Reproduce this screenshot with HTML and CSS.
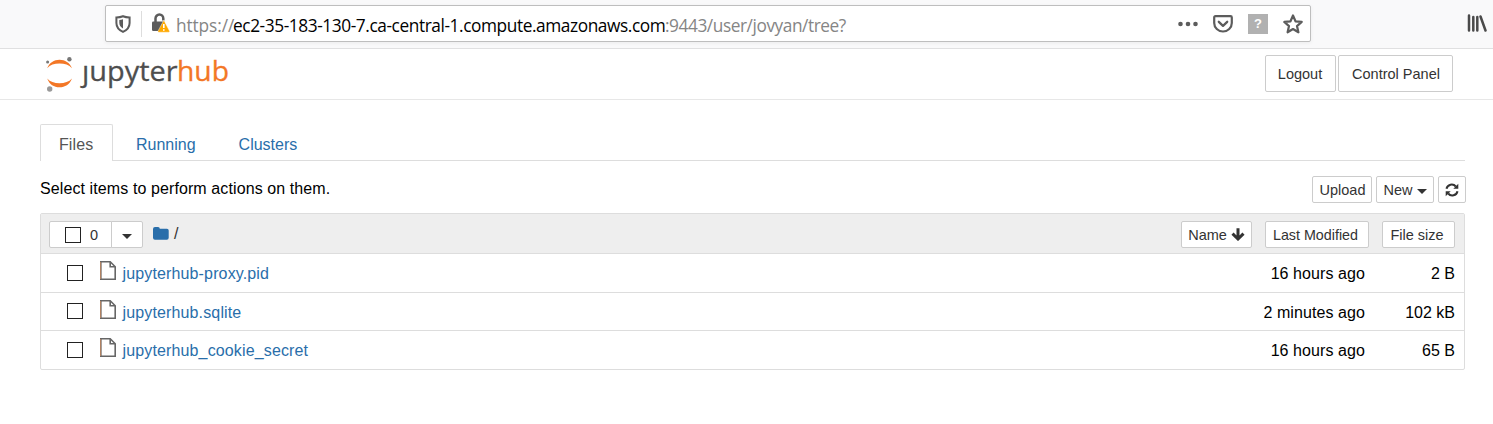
FILE: index.html
```html
<!DOCTYPE html>
<html lang="en">
<head>
<meta charset="utf-8">
<title>Home</title>
<link rel="stylesheet" href="styles.css">
</head>
<body>
<div class="toolbar">
  <div class="urlbar">
    <svg class="shield" width="16" height="18" viewBox="0 0 16 18"><path d="M8 1.200c2.200.9 4.300 1.200 6.600 1.300V8c0 4-2.400 7-6.600 8.900C3.800 15 1.400 12 1.400 8V2.500C3.700 2.400 5.800 2.100 8 1.200z" fill="none" stroke="#5c5c5c" stroke-width="2"/><path d="M8 4.200v9.400c-2.500-1.500-3.700-3.300-3.700-5.800V5C5.600 4.900 6.800 4.700 8 4.200z" fill="#5c5c5c"/></svg>
    <span class="divider"></span>
    <svg class="lock" width="19" height="20" viewBox="0 0 19 20"><path d="M4.500 10V5.500a3.900 3.900 0 0 1 7.800 0v2" fill="none" stroke="#5c5c5c" stroke-width="2.500"/><rect x="1" y="8.500" width="13" height="9.500" rx="1.300" fill="#5c5c5c"/><path d="M12.800 7.300 18.500 18a.8.8 0 0 1-.7 1.200H7.700A.8.800 0 0 1 7 18z" fill="#ffa900" stroke="#fff" stroke-width=".4"/><path d="M12.800 11v4M12.800 16.200v1.500" stroke="#fff" stroke-width="1.600"/></svg>
    <div class="url"><span class="scheme">https://</span><span class="host">ec2-35-183-130-7.ca-central-1.compute.amazonaws.com</span><span class="path">:9443/user/jovyan/tree?</span></div>
    <div class="actions">
      <svg width="20" height="6" viewBox="0 0 20 6"><g fill="#5c5c5c"><circle cx="2.500" cy="3" r="2.300"/><circle cx="10" cy="3" r="2.300"/><circle cx="17.500" cy="3" r="2.300"/></g></svg>
      <svg width="20" height="18" viewBox="0 0 20 18"><path d="M2.500 1.200h15q1.300 0 1.300 1.300v5.500a8.800 8.500 0 0 1-17.600 0V2.500q0-1.300 1.300-1.300z" fill="none" stroke="#5c5c5c" stroke-width="2.200"/><path d="m5.800 6.800 4.200 4 4.200-4" fill="none" stroke="#5c5c5c" stroke-width="2.300" stroke-linecap="round" stroke-linejoin="round"/></svg>
      <span class="unknown">?</span>
      <svg class="star" width="20" height="20" viewBox="0 0 20 20"><path d="m10 1.500 2.500 5.800 6.200.6-4.700 4.200 1.400 6.200-5.400-3.300-5.400 3.300L6 12.100 1.300 7.900l6.200-.6z" fill="none" stroke="#5c5c5c" stroke-width="2.200" stroke-linejoin="round"/></svg>
    </div>
  </div>
  <svg class="library" width="20" height="18" viewBox="0 0 20 18"><path d="M2 1.500v15M6.300 3v13.500M10.300 3v13.500M13.500 2.500l5 14" fill="none" stroke="#4a4a4a" stroke-width="2.500" stroke-linecap="round"/></svg>
</div>
<header class="header">
  <svg class="logo" width="186" height="50" viewBox="0 0 186 50">
    <path d="M2.200 19.300C4.500 13.500 9 10.700 14.500 10.700s10.200 2.800 12.500 8.600c-3-3.300-7.300-4.700-12.500-4.700s-9.400 1.400-12.300 4.700z" fill="#f37726"/>
    <path d="M2.200 29.500C4.500 35.500 9 38.300 14.500 38.300S24.700 35.500 27 29.500c-3 3.300-7.300 4.700-12.500 4.700s-9.400-1.400-12.300-4.700z" fill="#f37726"/>
    <circle cx="24.400" cy="10.300" r="2.200" fill="#777"/><circle cx="2.600" cy="13" r="1.500" fill="#777"/><circle cx="4.700" cy="40" r="2.700" fill="#999"/>
    <text class="logo-text" x="37" y="32" textLength="95.500" lengthAdjust="spacingAndGlyphs" fill="#4e4e4e">ȷupyter</text>
    <text class="logo-text hub" x="132" y="32" textLength="52" lengthAdjust="spacingAndGlyphs" fill="#f37726">hub</text>
  </svg>
  <div class="session"><button class="btn large logout">Logout</button><button class="btn large control">Control Panel</button></div>
</header>
<main class="content">
  <nav class="tabs"><a class="tab active">Files</a><a class="tab">Running</a><a class="tab clusters">Clusters</a></nav>
  <div class="tools">
    <span class="hint">Select items to perform actions on them.</span>
    <div class="tool-buttons">
      <button class="btn upload">Upload</button>
      <button class="btn new">New<i class="caret"></i></button>
      <button class="btn refresh"><svg width="14" height="14" viewBox="0 0 14 14"><path d="M1.500 5.800A5.300 5.300 0 0 1 10.800 3.500M12.500 8.200A5.300 5.300 0 0 1 3.200 10.500" fill="none" stroke="#333" stroke-width="2"/><path d="M13.300.8v5h-5zM.700 13.200v-5h5z" fill="#333"/></svg></button>
    </div>
  </div>
  <section class="list">
    <div class="list-head">
      <div class="select"><button class="btn count"><i class="box"></i>0</button><button class="btn drop"><i class="caret"></i></button></div>
      <svg class="folder" width="16" height="13" viewBox="0 0 16 13"><path d="M0 2Q0 0 2 0h3q1.800 0 1.800 1.800H14q1.700 0 1.700 1.800v7.200q0 1.900-1.900 1.900H2q-2 0-2-1.900z" fill="#296eaa"/></svg>
      <span class="slash">/</span>
      <div class="sorts">
        <button class="btn name">Name<svg width="14" height="13" viewBox="0 0 14 13"><path d="M7 .3v10M1.500 5.700 7 11 12.500 5.700" fill="none" stroke="#333" stroke-width="3"/></svg></button>
        <button class="btn modified">Last Modified</button>
        <button class="btn size">File size</button>
      </div>
    </div>
    <div class="row first"><i class="box"></i><svg class="file" width="16" height="19" viewBox="0 0 16 19"><path d="M.8.8h9.400l5 5v12.400H.8zM10.200.8v5h5" fill="none" stroke="#666" stroke-width="1.600"/><path d="M.6 1v17" stroke="#b98562"/></svg><a class="file-name">jupyterhub-proxy.pid</a><span class="time">16 hours ago</span><span class="bytes">2 B</span></div>
    <div class="row"><i class="box up"></i><svg class="file" width="16" height="19" viewBox="0 0 16 19"><path d="M.8.8h9.400l5 5v12.400H.8zM10.200.8v5h5" fill="none" stroke="#666" stroke-width="1.600"/><path d="M.6 1v17" stroke="#b98562"/></svg><a class="file-name">jupyterhub.sqlite</a><span class="time">2 minutes ago</span><span class="bytes">102 kB</span></div>
    <div class="row last"><i class="box"></i><svg class="file" width="16" height="19" viewBox="0 0 16 19"><path d="M.8.8h9.400l5 5v12.400H.8zM10.200.8v5h5" fill="none" stroke="#666" stroke-width="1.600"/><path d="M.6 1v17" stroke="#b98562"/></svg><a class="file-name">jupyterhub_cookie_secret</a><span class="time">16 hours ago</span><span class="bytes">65 B</span></div>
  </section>
</main>
</body>
</html>
```
FILE: styles.css
```css
* { box-sizing: border-box; }
body { margin: 0; height: 424px; overflow: hidden; background: #fff; color: #000; font: 16px/20px "Liberation Sans", Arial, sans-serif; }
svg { display: block; flex: none; }
.toolbar { height: 49px; padding: 5px 6px 0 105px; display: flex; background: #f9f9fa; border-bottom: 1px solid #e0e0e1; }
.urlbar { width: 1206px; height: 37px; display: flex; align-items: center; padding: 0 7px 0 9px; background: #fff; border: 1px solid #bebebe; border-radius: 2px; box-shadow: 0 1px 4px rgba(0,0,0,.06); }
.divider { width: 1px; height: 26px; background: #ddd; margin-left: 10px; }
.lock { margin: 0 0 1px 9px; }
.url { margin: 4px 0 0 6px; display: flex; white-space: nowrap; font: 17.300px/24px "Open Sans", sans-serif; color: #858585; }
.scheme { width: 57px; letter-spacing: -.1px; }
.host { width: 432px; color: #000; letter-spacing: -.42px; }
.path { letter-spacing: -.44px; }
.actions { margin-left: auto; display: flex; align-items: center; gap: 15px; }
.unknown { width: 20px; height: 20px; background: #b1b1b1; color: #fff; text-align: center; font: bold 13px/20px "Liberation Sans", sans-serif; }
.library { margin: 9px 0 0 auto; }
.header { height: 51px; padding: 0 40px 0 45px; display: flex; justify-content: space-between; border-bottom: 1px solid #e7e7e7; }
.logo { overflow: visible; }
.logo-text { font: 28px "Open Sans", sans-serif; stroke: #4e4e4e; stroke-width: .3px; }
.hub { stroke: #f37726; }
.session { display: flex; gap: 2px; padding-top: 6px; }
.btn { margin: 0; padding: 0; height: 27px; display: flex; align-items: center; justify-content: center; background: #fff; border: 1px solid #ccc; border-radius: 2px; color: #333; font: 14.500px/20px "Liberation Sans", Arial, sans-serif; white-space: nowrap; }
.large { height: 37px; }
.logout { width: 71px; padding-right: 1px; }
.control { width: 115px; padding-left: 1px; }
.content { padding: 24px 28px 0 40px; }
.tabs { display: flex; gap: 1px; height: 37px; border-bottom: 1px solid #ddd; }
.tab { height: 37px; padding: 10px 20px 0 21px; border: 1px solid transparent; border-bottom: 0; color: #296eaa; }
.clusters { padding-left: 20px; }
.active { width: 73px; padding-left: 18px; color: #555; background: #fff; border-color: #ddd; border-radius: 2px 2px 0 0; letter-spacing: .1px; }
.tools { height: 52px; display: flex; justify-content: space-between; padding: 15px 0 0; margin-right: -1px; }
.hint { padding-top: 3px; letter-spacing: .1px; }
.tool-buttons { display: flex; gap: 4px; }
.upload { width: 60px; padding-left: 1px; }
.new { width: 58px; }
.refresh { width: 28px; }
.caret { border: 5px solid transparent; border-top-color: #333; border-bottom: 0; margin: 3px 0 0 4px; }
.list { border: 1px solid #ddd; border-radius: 2px; }
.list-head { height: 40px; padding: 0 9px 0 8px; display: flex; align-items: flex-start; background: #eee; border-bottom: 1px solid #ddd; }
.select { display: flex; margin-top: 7px; }
.box { width: 16px; height: 16px; flex: none; background: #fff; border: 1px solid #222; }
.up { margin-bottom: 2px; }
.count { width: 63px; gap: 9px; padding-left: 2px; border-radius: 2px 0 0 2px; }
.drop { width: 32px; margin-left: -1px; border-radius: 0 2px 2px 0; }
.drop .caret { margin-left: 0; }
.folder { margin: 13px 0 0 10px; }
.slash { margin: 10px 0 0 5px; color: #333; }
.sorts { margin: 7px 0 0 auto; display: flex; }
.name { width: 71px; gap: 4px; }
.modified { width: 104px; margin-left: 13px; padding-right: 3px; font-size: 14.300px; }
.size { width: 73px; margin-left: 13px; padding-right: 3px; }
.row { height: 38px; display: flex; align-items: center; padding: 0 9px 0 26px; border-bottom: 1px solid #ddd; }
.first { height: 39px; }
.last { border-bottom: 0; }
.file { margin: -5px 0 0 17px; }
.file-name { margin: 2px 0 0 6.500px; color: #296eaa; letter-spacing: .14px; }
.time { margin: 2px 0 0 auto; letter-spacing: .08px; }
.bytes { width: 90px; margin-top: 2px; text-align: right; }
```
